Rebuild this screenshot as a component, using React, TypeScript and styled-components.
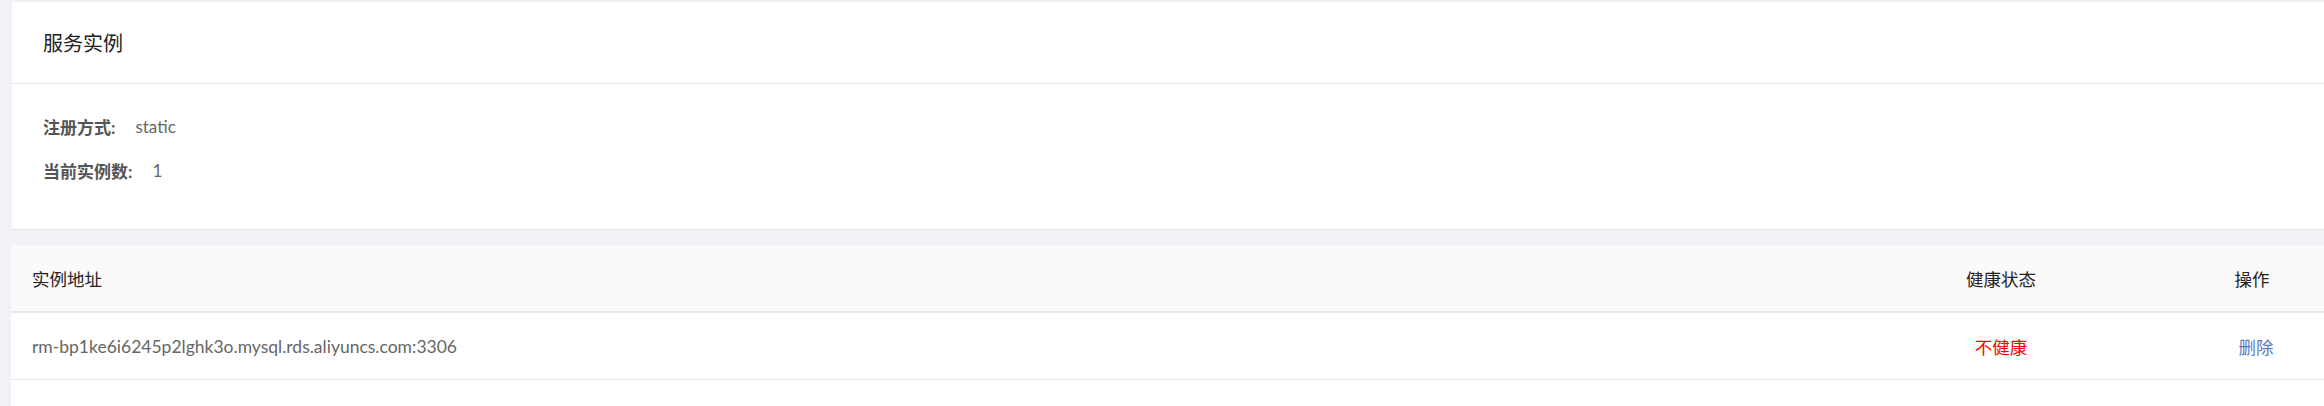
import styled, { createGlobalStyle } from 'styled-components'

const GlobalStyle = createGlobalStyle`
  html, body {
    margin: 0;
    padding: 0;
    background: #f0f2f5;
  }
  body {
    font-family: Lato, "Noto Sans CJK SC", sans-serif;
    color: #333;
  }
`

const Page = styled.div`
  display: flex;
  flex-direction: column;
  padding-top: 2px;
`

const InfoCard = styled.section`
  margin-left: 12px;
  background: #fff;
  border-bottom: 1px solid #e4e6ea;
`

const CardHeader = styled.div`
  height: 81px;
  display: flex;
  align-items: center;
  padding-left: 31px;
  border-bottom: 1px solid #e8e8e8;
  font-size: 20px;
  color: #222;
`

const CardBody = styled.div`
  padding: 20px 31px 37px;
`

const InfoRow = styled.div`
  height: 44px;
  display: flex;
  align-items: center;
  font-size: 17px;
`

const Label = styled.span`
  font-weight: 700;
  color: #555;
  margin-right: 20px;
`

const Value = styled.span`
  color: #666;
`

const TableCard = styled.section`
  margin-top: 15px;
  margin-left: 11px;
  background: #fff;
  min-height: 161px;
`

const Row = styled.div<{ $head?: boolean }>`
  display: grid;
  grid-template-columns: 1fr 358px 144px;
  height: 66px;
  align-items: center;
  font-size: 17.5px;
  background: ${(p) => (p.$head ? '#fafafa' : '#fff')};
  border-bottom: ${(p) => (p.$head ? '2px solid #e8e8e8' : '1px solid #e8e8e8')};
  color: ${(p) => (p.$head ? '#222' : '#666')};
`

const Cell = styled.div<{ $align?: 'left' | 'center' }>`
  padding-left: ${(p) => (p.$align === 'center' ? '0' : '21px')};
  text-align: ${(p) => p.$align || 'left'};
`

const Unhealthy = styled.span`
  color: #ff0000;
`

const DeleteLink = styled.a`
  color: #5b7bc4;
  cursor: pointer;
  padding-left: 8px;
`

const App = () => {
  return (
    <Page>
      <GlobalStyle />
      <InfoCard>
        <CardHeader>服务实例</CardHeader>
        <CardBody>
          <InfoRow>
            <Label>注册方式:</Label>
            <Value>static</Value>
          </InfoRow>
          <InfoRow>
            <Label>当前实例数:</Label>
            <Value>1</Value>
          </InfoRow>
        </CardBody>
      </InfoCard>
      <TableCard>
        <Row $head>
          <Cell>实例地址</Cell>
          <Cell $align="center">健康状态</Cell>
          <Cell $align="center">操作</Cell>
        </Row>
        <Row>
          <Cell>rm-bp1ke6i6245p2lghk3o.mysql.rds.aliyuncs.com:3306</Cell>
          <Cell $align="center">
            <Unhealthy>不健康</Unhealthy>
          </Cell>
          <Cell $align="center">
            <DeleteLink>删除</DeleteLink>
          </Cell>
        </Row>
      </TableCard>
    </Page>
  )
}

export default App
